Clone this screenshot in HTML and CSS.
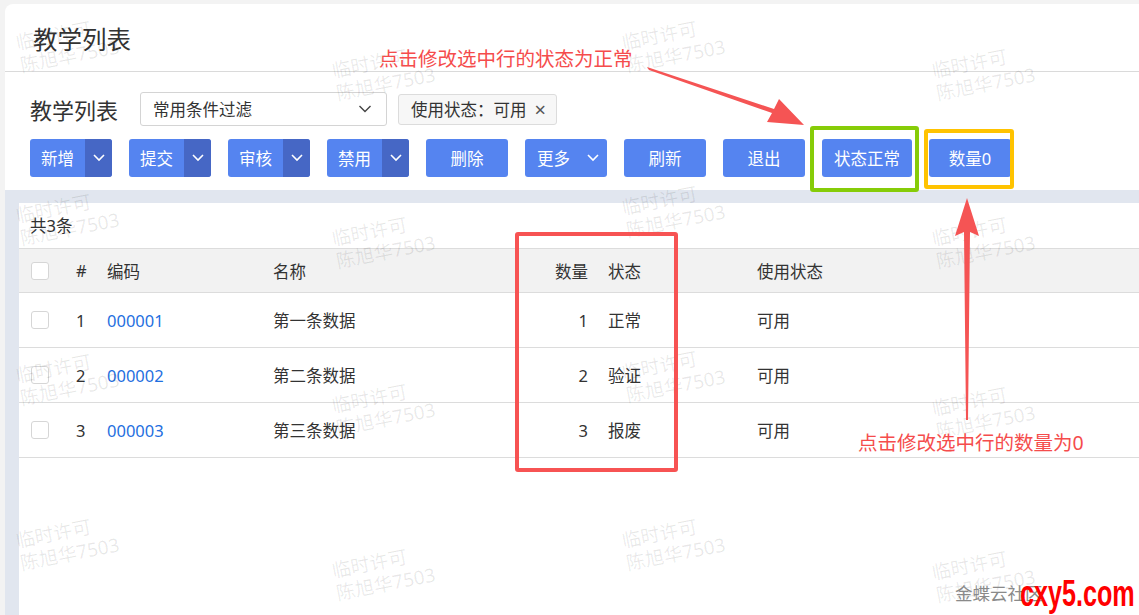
FILE: index.html
```html
<!DOCTYPE html>
<html>
  <head>
    <meta charset="utf-8">
    <title>教学列表</title>
    <link rel="stylesheet" href="styles.css">
  </head>
<body>
<div class="page">
  <div class="page-head">教学列表</div>
  <div class="filter-row">
    <span class="filter-title">教学列表</span>
    <div class="select">
      <span>常用条件过滤</span>
      <svg width="14" height="8" viewBox="0 0 14 8"><polyline points="1.5,1 7,6.5 12.5,1" fill="none" stroke="#444" stroke-width="1.4"/></svg>
    </div>
    <div class="tag">使用状态：可用<span class="tag-close">×</span></div>
  </div>
  <div class="toolbar">
    <div class="btn-split"><span class="btn-main">新增</span><span class="btn-drop"><svg width="12" height="8" viewBox="0 0 12 8"><polyline points="1,1 6,6 11,1" fill="none" stroke="#fff" stroke-width="1.6"/></svg></span></div>
    <div class="btn-split"><span class="btn-main">提交</span><span class="btn-drop"><svg width="12" height="8" viewBox="0 0 12 8"><polyline points="1,1 6,6 11,1" fill="none" stroke="#fff" stroke-width="1.6"/></svg></span></div>
    <div class="btn-split"><span class="btn-main">审核</span><span class="btn-drop"><svg width="12" height="8" viewBox="0 0 12 8"><polyline points="1,1 6,6 11,1" fill="none" stroke="#fff" stroke-width="1.6"/></svg></span></div>
    <div class="btn-split"><span class="btn-main">禁用</span><span class="btn-drop"><svg width="12" height="8" viewBox="0 0 12 8"><polyline points="1,1 6,6 11,1" fill="none" stroke="#fff" stroke-width="1.6"/></svg></span></div>
    <button class="btn">删除</button>
    <button class="btn btn-more">更多<svg width="12" height="8" viewBox="0 0 12 8"><polyline points="1,1 6,6 11,1" fill="none" stroke="#fff" stroke-width="1.6"/></svg></button>
    <button class="btn">刷新</button>
    <button class="btn">退出</button>
    <button class="btn btn-wide">状态正常</button>
    <button class="btn">数量0</button>
  </div>
  <div class="content">
    <div class="panel">
      <div class="total">共3条</div>
      <div class="grid head">
        <div class="cell"><span class="check"></span></div>
        <div class="cell">#</div>
        <div class="cell">编码</div>
        <div class="cell">名称</div>
        <div class="cell num">数量</div>
        <div class="cell">状态</div>
        <div class="cell">使用状态</div>
      </div>
      <div class="grid row">
        <div class="cell"><span class="check"></span></div>
        <div class="cell">1</div>
        <div class="cell link">000001</div>
        <div class="cell">第一条数据</div>
        <div class="cell num">1</div>
        <div class="cell">正常</div>
        <div class="cell">可用</div>
      </div>
      <div class="grid row">
        <div class="cell"><span class="check"></span></div>
        <div class="cell">2</div>
        <div class="cell link">000002</div>
        <div class="cell">第二条数据</div>
        <div class="cell num">2</div>
        <div class="cell">验证</div>
        <div class="cell">可用</div>
      </div>
      <div class="grid row">
        <div class="cell"><span class="check"></span></div>
        <div class="cell">3</div>
        <div class="cell link">000003</div>
        <div class="cell">第三条数据</div>
        <div class="cell num">3</div>
        <div class="cell">报废</div>
        <div class="cell">可用</div>
      </div>
    </div>
  </div>
</div>

<!-- 水印 -->
<div class="wm" style="left:14px;top:32px">临时许可<br>陈旭华7503</div>
<div class="wm" style="left:330px;top:60px">临时许可<br>陈旭华7503</div>
<div class="wm" style="left:620px;top:32px">临时许可<br>陈旭华7503</div>
<div class="wm" style="left:930px;top:60px">临时许可<br>陈旭华7503</div>
<div class="wm" style="left:14px;top:205px">临时许可<br>陈旭华7503</div>
<div class="wm" style="left:330px;top:228px">临时许可<br>陈旭华7503</div>
<div class="wm" style="left:620px;top:197px">临时许可<br>陈旭华7503</div>
<div class="wm" style="left:930px;top:228px">临时许可<br>陈旭华7503</div>
<div class="wm" style="left:14px;top:365px">临时许可<br>陈旭华7503</div>
<div class="wm" style="left:330px;top:395px">临时许可<br>陈旭华7503</div>
<div class="wm" style="left:620px;top:362px">临时许可<br>陈旭华7503</div>
<div class="wm" style="left:930px;top:398px">临时许可<br>陈旭华7503</div>
<div class="wm" style="left:14px;top:530px">临时许可<br>陈旭华7503</div>
<div class="wm" style="left:330px;top:560px">临时许可<br>陈旭华7503</div>
<div class="wm" style="left:620px;top:530px">临时许可<br>陈旭华7503</div>
<div class="wm" style="left:930px;top:562px">临时许可<br>陈旭华7503</div>

<!-- 标注 -->
<div class="note note-1">点击修改选中行的状态为正常</div>
<div class="note note-2">点击修改选中行的数量为0</div>
<div class="mark mark-green"></div>
<div class="mark mark-yellow"></div>
<div class="mark mark-red"></div>
<svg class="arrows" width="1139" height="615" viewBox="0 0 1139 615">
  <polygon points="647,67 649,70 772,113 767,122 804,125 779,99 774,109" fill="#f55454"/>
  <polygon points="966,420 968,420 970,232 979,236 967,198 955,236 964,232" fill="#f55454"/>
</svg>
<div class="sign">金蝶云社区</div>
<div class="brand">cxy5.com</div>
</body>
</html>
```

FILE: styles.css
```css
body {
  margin: 0;
  padding: 4px 0 0 5px;
  background: #f3f3f3;
  font-family: "Noto Sans", "Noto Sans CJK SC", sans-serif;
  color: #333;
  width: 1134px;
  height: 611px;
  overflow: hidden;
  position: relative;
}
.page {
  background: #fff;
  border-radius: 8px 0 0 0;
  height: 611px;
  display: flex;
  flex-direction: column;
}
.page-head {
  height: 68px;
  box-sizing: border-box;
  padding: 2px 0 0 28px;
  border-bottom: 1px solid #dadada;
  display: flex;
  align-items: center;
  font-size: 24.5px;
  color: #333;
}
.filter-row {
  display: flex;
  align-items: center;
  margin-top: 20px;
  padding-left: 25px;
  height: 34px;
}
.filter-title {
  font-size: 22px;
  width: 110px;
}
.select {
  width: 247px;
  height: 34px;
  box-sizing: border-box;
  border: 1px solid #d4d4d4;
  border-radius: 3px;
  display: flex;
  align-items: center;
  justify-content: space-between;
  padding: 0 14px 0 12px;
  font-size: 16.5px;
}
.tag {
  margin-left: 11px;
  height: 31px;
  box-sizing: border-box;
  border: 1px solid #dcdcdc;
  border-radius: 3px;
  background: #f7f7f7;
  display: flex;
  align-items: center;
  padding: 0 10px 0 12px;
  font-size: 16.5px;
}
.tag-close {
  margin-left: 8px;
  color: #555;
  font-size: 20px;
}
.toolbar {
  display: flex;
  gap: 17px;
  margin-top: 13px;
  padding: 0 0 13px 25px;
}
.btn, .btn-split {
  height: 38px;
  border-radius: 3px;
  background: #5584f0;
  color: #fff;
  font-size: 16.5px;
  font-family: inherit;
}
.btn {
  border: none;
  min-width: 82px;
  padding: 0 12px;
  display: flex;
  align-items: center;
  justify-content: center;
}
.btn-more {
  justify-content: space-between;
  padding: 0 8px 0 12px;
}
.btn-split {
  display: flex;
  overflow: hidden;
}
.btn-main {
  width: 55px;
  display: flex;
  align-items: center;
  justify-content: center;
}
.btn-drop {
  width: 27px;
  background: #4667c5;
  display: flex;
  align-items: center;
  justify-content: center;
}
.content {
  flex: 1;
  background: #e1e6ef;
  padding: 13px 0 0 14px;
  display: flex;
}
.panel {
  flex: 1;
  background: #fff;
}
.total {
  height: 45px;
  line-height: 46px;
  padding-left: 11px;
  font-size: 16.5px;
}
.grid {
  display: grid;
  grid-template-columns: 47px 31px 166px 192px 143px 149px 1fr;
  border-bottom: 1px solid #dcdcdc;
  font-size: 16.5px;
}
.grid.head {
  height: 45px;
  background: #f2f2f2;
  border-top: 1px solid #dcdcdc;
  box-sizing: border-box;
}
.grid.row {
  height: 55px;
  box-sizing: border-box;
}
.cell {
  display: flex;
  align-items: center;
  padding-left: 10px;
}
.cell:first-child {
  padding-left: 12px;
}
.cell.num {
  justify-content: flex-end;
  padding: 0 10px 0 0;
}
.cell.link {
  color: #1f6fe0;
}
.check {
  width: 18px;
  height: 18px;
  box-sizing: border-box;
  border: 1px solid #d6d6d6;
  border-radius: 3px;
  background: #fff;
}
.wm {
  position: absolute;
  font-size: 19px;
  line-height: 23px;
  color: rgba(0, 0, 0, 0.09);
  transform: rotate(-11deg);
  transform-origin: left top;
  white-space: nowrap;
  pointer-events: none;
}
.note {
  position: absolute;
  color: #f54c4c;
  font-size: 19.5px;
  white-space: nowrap;
}
.note-1 {
  left: 379px;
  top: 43px;
}
.note-2 {
  left: 858px;
  top: 427px;
}
.mark {
  position: absolute;
  border-radius: 3px;
}
.mark-green {
  left: 810px;
  top: 126px;
  width: 101px;
  height: 58px;
  border: 4px solid #86cc08;
}
.mark-yellow {
  left: 924px;
  top: 129px;
  width: 82px;
  height: 52px;
  border: 4px solid #ffc300;
}
.mark-red {
  left: 515px;
  top: 232px;
  width: 155px;
  height: 232px;
  border: 4px solid #f75353;
}
.arrows {
  position: absolute;
  left: 0;
  top: 0;
}
.sign {
  position: absolute;
  left: 955px;
  top: 580px;
  font-size: 17.5px;
  color: #8a8a8a;
  white-space: nowrap;
}
.brand {
  position: absolute;
  left: 1020px;
  top: 574px;
  font-family: "Liberation Sans", sans-serif;
  font-weight: bold;
  font-size: 37px;
  line-height: 40px;
  color: #f00;
  transform: scaleX(0.68);
  transform-origin: left top;
  white-space: nowrap;
}
```
